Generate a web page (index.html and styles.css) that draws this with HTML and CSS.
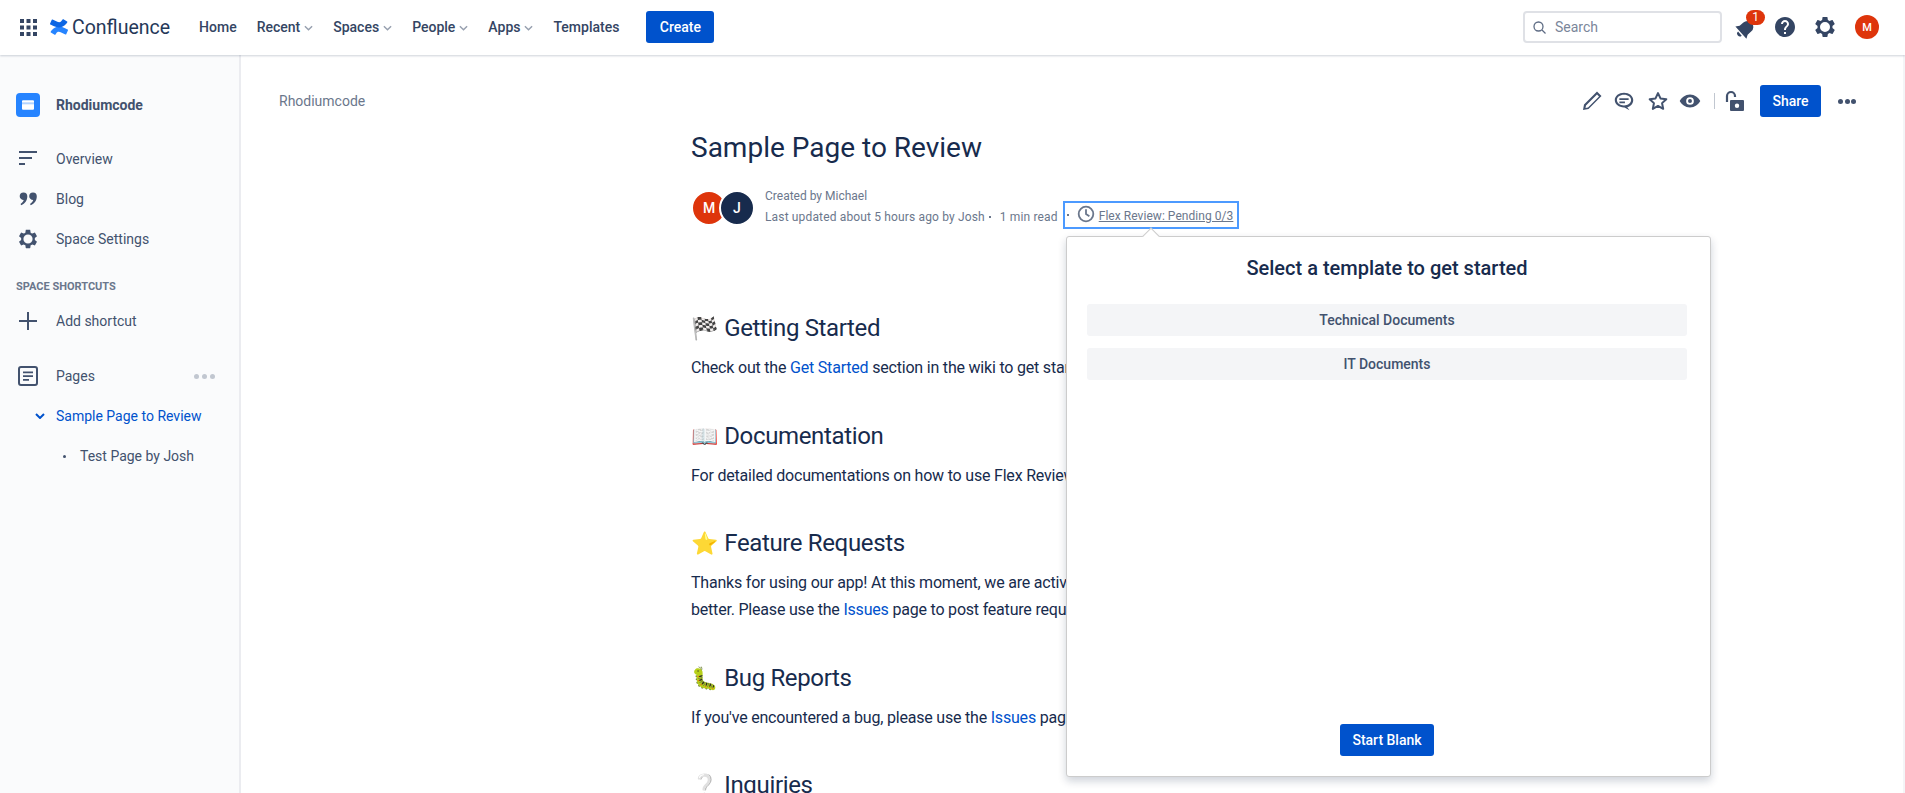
FILE: index.html
```html
<!DOCTYPE html>
<html lang="en">
<head>
    <meta charset="UTF-8">
    <meta name="viewport" content="width=device-width, initial-scale=1.0">
    <title>Sample Page to Review - Confluence</title>
    <link rel="stylesheet" href="styles.css">
</head>
<body>
    <svg class="sprites" aria-hidden="true">
        <symbol id="gear" viewBox="0 0 24 24"><path fill-rule="evenodd" d="M19.43 12.98c.04-.32.07-.64.07-.98s-.03-.66-.07-.98l2.11-1.65c.19-.15.24-.42.12-.64l-2-3.46c-.12-.22-.39-.3-.61-.22l-2.49 1c-.52-.4-1.08-.73-1.69-.98l-.38-2.65C14.46 2.18 14.25 2 14 2h-4c-.25 0-.46.18-.49.42l-.38 2.65c-.61.25-1.17.59-1.69.98l-2.49-1c-.23-.09-.49 0-.61.22l-2 3.46c-.13.22-.07.49.12.64l2.11 1.65c-.04.32-.07.65-.07.98s.03.66.07.98l-2.11 1.65c-.19.15-.24.42-.12.64l2 3.46c.12.22.39.3.61.22l2.49-1c.52.4 1.08.73 1.69.98l.38 2.65c.03.24.24.42.49.42h4c.25 0 .46-.18.49-.42l.38-2.65c.61-.25 1.17-.59 1.69-.98l2.49 1c.23.09.49 0 .61-.22l2-3.46c.12-.22.07-.49-.12-.64l-2.11-1.65zM12 17a5 5 0 1 1 0-10 5 5 0 0 1 0 10z"/></symbol>
        <symbol id="chevron" viewBox="0 0 10 6"><path d="M1 1l4 4 4-4" fill="none" stroke="currentColor"/></symbol>
    </svg>

    <header class="topbar">
        <svg class="apps-icon" viewBox="0 0 17 17"><path d="M0 0h4v4H0zM6.500 0h4v4h-4zM13 0h4v4h-4zM0 6.500h4v4H0zM6.500 6.500h4v4h-4zM13 6.500h4v4h-4zM0 13h4v4H0zM6.500 13h4v4h-4zM13 13h4v4h-4z"/></svg>
        <div class="logo">
            <svg class="logo-mark" viewBox="0 0 32 32">
                <path fill="#2684ff" d="M2.260 22.640c-.33.54-.7 1.170-1.020 1.670a1.020 1.020 0 0 0 .34 1.400l6.670 4.100a1.030 1.030 0 0 0 1.420-.34c.27-.44.61-1.020.99-1.650 2.670-4.400 5.360-3.860 10.200-1.550l6.610 3.140a1.030 1.030 0 0 0 1.380-.52l3.180-7.180a1.020 1.020 0 0 0-.51-1.340c-1.400-.66-4.180-1.970-6.680-3.170C17.010 13.870 9.610 14.230 2.260 22.640z"/>
                <path fill="#0c66e4" d="M29.740 9.360c.33-.54.7-1.170 1.020-1.670a1.020 1.020 0 0 0-.34-1.400l-6.670-4.100a1.030 1.030 0 0 0-1.420.34c-.27.44-.61 1.020-.99 1.650-2.670 4.400-5.360 3.860-10.200 1.550L4.530 2.590a1.030 1.030 0 0 0-1.380.52L-.03 10.290a1.020 1.020 0 0 0 .51 1.340c1.400.66 4.180 1.970 6.680 3.170 7.830 3.330 15.230 2.970 22.580-5.440z"/>
            </svg>
            <span>Confluence</span>
        </div>
        <nav class="topnav">
            <a>Home</a>
            <a>Recent <svg class="caret"><use href="#chevron"/></svg></a>
            <a>Spaces <svg class="caret"><use href="#chevron"/></svg></a>
            <a>People <svg class="caret"><use href="#chevron"/></svg></a>
            <a>Apps <svg class="caret"><use href="#chevron"/></svg></a>
            <a>Templates</a>
        </nav>
        <button class="btn-primary create">Create</button>
        <div class="topbar-right">
            <div class="search">
                <svg viewBox="0 0 16 16"><circle cx="7.500" cy="7.500" r="4.500" fill="none" stroke="#5e6c84" stroke-width="1.300"/><path d="M11 11l3.500 3.500" stroke="#5e6c84" stroke-width="1.300"/></svg>
                <span>Search</span>
            </div>
            <div class="bell">
                <svg viewBox="0 0 24 24"><g transform="rotate(48 12 12)"><path d="M12 2a6.500 6.500 0 0 0-6.500 6.500V14L3 18h18l-2.500-4V8.500A6.500 6.500 0 0 0 12 2z"/><path d="M9 19.500a3 3 0 0 0 6 0z"/></g></svg>
                <span class="badge">1</span>
            </div>
            <svg class="top-icon" viewBox="0 0 24 24"><path d="M12 2C6.480 2 2 6.480 2 12s4.480 10 10 10 10-4.480 10-10S17.520 2 12 2zm1 17h-2v-2h2v2zm2.070-7.750l-.9.92C13.450 12.900 13 13.500 13 15h-2v-.5c0-1.100.45-2.100 1.170-2.830l1.240-1.260c.37-.36.59-.86.59-1.410 0-1.100-.9-2-2-2s-2 .9-2 2H8c0-2.210 1.790-4 4-4s4 1.790 4 4c0 .88-.36 1.680-.93 2.250z"/></svg>
            <svg class="top-icon"><use href="#gear"/></svg>
            <span class="avatar avatar-small">M</span>
        </div>
    </header>

    <div class="layout">
        <aside class="sidebar">
            <div class="space-title">
                <span class="space-icon">
                    <svg viewBox="0 0 24 24"><path fill="#fff" d="M3 6.500A1.500 1.500 0 0 1 4.500 5h15A1.500 1.500 0 0 1 21 6.500v11a1.500 1.500 0 0 1-1.500 1.500h-15A1.500 1.500 0 0 1 3 17.500z"/><path fill="#b3d4ff" d="M3 8h18v3H3z"/></svg>
                </span>
                <strong>Rhodiumcode</strong>
            </div>
            <ul class="side-list">
                <li>
                    <svg class="side-icon" viewBox="0 0 20 20"><path d="M1 2h18v2H1zM1 8h13v2H1zM1 14h6v2H1z"/></svg>
                    Overview
                </li>
                <li>
                    <svg class="side-icon" viewBox="0 0 20 20"><path d="M5.500 3.500a3.800 3.800 0 0 1 3.800 3.800c0 4.200-2.300 7.500-6 9l-.8-1.300c1.800-1.100 2.900-2.600 3.200-4-2.300 0-4-1.700-4-3.700a3.800 3.800 0 0 1 3.800-3.800z"/><path transform="translate(9.500 0)" d="M5.500 3.500a3.800 3.800 0 0 1 3.800 3.800c0 4.200-2.300 7.500-6 9l-.8-1.300c1.800-1.100 2.900-2.600 3.200-4-2.300 0-4-1.700-4-3.700a3.800 3.800 0 0 1 3.800-3.800z"/></svg>
                    Blog
                </li>
                <li>
                    <svg class="side-icon gear-icon"><use href="#gear"/></svg>
                    Space Settings
                </li>
            </ul>
            <h4 class="side-heading">SPACE SHORTCUTS</h4>
            <ul class="side-list">
                <li>
                    <svg class="side-icon" viewBox="0 0 20 20"><path d="M9 1h2v8h8v2h-8v8H9v-8H1V9h8z"/></svg>
                    Add shortcut
                </li>
            </ul>
            <ul class="side-list pages-list">
                <li>
                    <svg class="side-icon" viewBox="0 0 20 20"><rect x="1" y="1" width="18" height="18" rx="2" fill="none" stroke="#42526e" stroke-width="2"/><path d="M5 5.500h10v1.800H5zM5 9.200h10V11H5zM5 12.900h6v1.800H5z"/></svg>
                    Pages
                    <span class="more-dots"><i></i><i></i><i></i></span>
                </li>
                <li class="current">
                    <svg class="tree-caret"><use href="#chevron"/></svg>
                    Sample Page to Review
                </li>
                <li class="child"><i class="bullet"></i>Test Page by Josh</li>
            </ul>
        </aside>

        <main class="main">
            <div class="page-bar">
                <span class="crumb">Rhodiumcode</span>
                <div class="page-actions">
                    <svg viewBox="0 0 24 24"><path d="M17 2.500l4.500 4.500L8.500 20 3 21l1-5.500zm0 3L6 16.500l-.5 2.500 2.500-.5L19 7.500z" fill-rule="evenodd"/></svg>
                    <svg class="act-comment" viewBox="-1 -1 26 26"><path fill-rule="evenodd" d="M12 3c5.500 0 10 3.400 10 8s-3.500 7.200-6.500 7.800L18 22l-5.500-3H12C6.500 19 2 15.600 2 11s4.500-8 10-8zm0 2.200C7.500 5.200 4.300 7.800 4.300 11s3.200 5.800 7.700 5.800 7.700-2.600 7.700-5.800S16.500 5.200 12 5.200zM7 9h10v2H7zm0 3.500h6v2H7z"/></svg>
                    <svg class="act-star" viewBox="-1 -1 26 26"><path d="M12 3.500l2.700 5.700 6.300.8-4.600 4.300 1.200 6.200L12 17.400l-5.600 3.100 1.200-6.200L3 10l6.300-.8z" fill="none" stroke="#42526e" stroke-width="2.200" stroke-linejoin="round"/></svg>
                    <svg class="act-eye" viewBox="-2 -2 28 28"><path fill-rule="evenodd" d="M12 4.500C6.500 4.500 2.200 8 0 12c2.200 4 6.500 7.500 12 7.500S21.800 16 24 12c-2.200-4-6.500-7.500-12-7.500zM12 7.500a4.500 4.500 0 1 1 0 9 4.500 4.500 0 0 1 0-9z"/><circle cx="12" cy="12" r="2.300"/></svg>
                    <span class="action-divider"></span>
                    <svg class="act-lock" viewBox="0 0 24 24"><path fill-rule="evenodd" d="M9 11h12a1 1 0 0 1 1 1v9a1 1 0 0 1-1 1H9a1 1 0 0 1-1-1v-9a1 1 0 0 1 1-1zm6 3.500a2.200 2.200 0 1 0 0 4.400 2.200 2.200 0 0 0 0-4.400z"/><path d="M5 13V7a4 4 0 0 1 8 0v1" fill="none" stroke="#42526e" stroke-width="2.200"/></svg>
                    <button class="btn-primary share">Share</button>
                    <span class="page-dots"><i></i><i></i><i></i></span>
                </div>
            </div>

            <article class="page">
                <h1 class="page-title">Sample Page to Review</h1>
                <div class="byline">
                    <div class="avatars">
                        <span class="avatar avatar-m">M</span>
                        <span class="avatar avatar-j">J</span>
                    </div>
                    <div class="byline-text">
                        <div>Created by Michael</div>
                        <div class="byline-row">
                            <span>Last updated about 5 hours ago by Josh</span>
                            <i class="dot"></i>
                            <span>1 min read</span>
                            <span class="flex-review">
                                <i class="dot"></i>
                                <svg viewBox="0 0 16 16"><circle cx="8" cy="8" r="6.500" fill="none" stroke="#6b778c" stroke-width="1.600"/><path d="M8 3.800V8l3 2" fill="none" stroke="#6b778c" stroke-width="1.600"/></svg>
                                <a>Flex Review: Pending 0/3</a>
                            </span>
                        </div>
                    </div>
                </div>

                <h2><span class="emoji">&#x1F3C1;</span> Getting Started</h2>
                <p>Check out the <a>Get Started</a> section in the wiki to get started with the app.</p>

                <h2><span class="emoji">&#x1F4D6;</span> Documentation</h2>
                <p>For detailed documentations on how to use Flex Review, see the wiki.</p>

                <h2><span class="emoji">&#x2B50;</span> Feature Requests</h2>
                <p>Thanks for using our app! At this moment, we are actively improving it to serve you<br>better. Please use the <a>Issues</a> page to post feature requests.</p>

                <h2><span class="emoji">&#x1F41B;</span> Bug Reports</h2>
                <p>If you've encountered a bug, please use the <a>Issues</a> page to report it.</p>

                <h2><span class="emoji">&#x2754;</span> Inquiries</h2>
            </article>

            <div class="popover">
                <span class="popover-arrow"></span>
                <h3>Select a template to get started</h3>
                <div class="template-list">
                    <button class="template">Technical Documents</button>
                    <button class="template">IT Documents</button>
                </div>
                <button class="btn-primary start-blank">Start Blank</button>
            </div>
        </main>
    </div>
</body>
</html>
```

FILE: styles.css
```css
* {
    box-sizing: border-box;
}
html, body {
    height: 100%;
}
body {
    margin: 0;
    overflow: hidden;
    font-family: Roboto, 'Liberation Sans', sans-serif;
    font-size: 14px;
    color: #172b4d;
    background: #fff;
    display: flex;
    flex-direction: column;
}
svg {
    fill: #42526e;
    flex: none;
}
ul {
    list-style: none;
    margin: 0;
    padding: 0;
}
.sprites {
    display: none;
}
.btn-primary {
    background: #0052cc;
    color: #fff;
    border: none;
    border-radius: 3px;
    font-family: inherit;
    font-size: 14px;
    font-weight: 500;
    height: 32px;
    padding: 0 12px;
}

/* top bar */
.topbar {
    height: 55px;
    flex: none;
    display: flex;
    align-items: center;
    padding: 0 0 1px 20px;
    background: #fff;
    box-shadow: 0 1px 2px rgba(9, 30, 66, 0.2);
    position: relative;
    z-index: 2;
}
.apps-icon {
    width: 17px;
    height: 17px;
    fill: #344563;
}
.logo {
    display: flex;
    align-items: center;
    margin-left: 13px;
    font-size: 19.5px;
    color: #253858;
}
.logo-mark {
    width: 18px;
    height: 18px;
    margin-right: 4px;
}
.topnav {
    display: flex;
    margin-left: 29px;
    gap: 20px;
}
.topnav a {
    font-weight: 500;
    color: #344563;
    display: flex;
    align-items: center;
    gap: 4px;
}
.caret {
    width: 9px;
    height: 6px;
    color: #97a0af;
    fill: none;
    margin-top: 2px;
    stroke-width: 1.6;
}
.create {
    margin-left: 27px;
    width: 68px;
    padding: 0;
}
.topbar-right {
    margin-left: auto;
    display: flex;
    align-items: center;
    padding-right: 26px;
}
.search {
    width: 199px;
    height: 32px;
    border: 2px solid #dfe1e6;
    border-radius: 4px;
    display: flex;
    align-items: center;
    gap: 8px;
    padding-left: 6px;
    color: #7a869a;
}
.search svg {
    width: 16px;
    height: 16px;
}
.bell {
    position: relative;
    margin-left: 12px;
    width: 22px;
    height: 24px;
}
.bell svg {
    width: 22px;
    height: 22px;
    fill: #344563;
    margin-top: 3px;
}
.badge {
    position: absolute;
    left: 12px;
    top: -5px;
    width: 19px;
    height: 15px;
    border-radius: 8px;
    background: #de350b;
    color: #fff;
    font-size: 12px;
    line-height: 15px;
    text-align: center;
}
.top-icon {
    width: 24px;
    height: 24px;
    fill: #344563;
    margin-left: 17px;
}
.top-icon + .top-icon {
    margin-left: 16px;
}
.avatar {
    border-radius: 50%;
    color: #fff;
    display: flex;
    align-items: center;
    justify-content: center;
    font-weight: 500;
}
.avatar-small {
    width: 24px;
    height: 24px;
    background: #de350b;
    font-size: 11px;
    margin-left: 18px;
}

/* left side */
.layout {
    flex: 1;
    display: flex;
    min-height: 0;
}
.sidebar {
    width: 241px;
    flex: none;
    background: #fafbfc;
    border-right: 2px solid #ebecf0;
    color: #42526e;
    padding-top: 38px;
}
.space-title {
    display: flex;
    align-items: center;
    height: 24px;
    padding-left: 16px;
    margin-bottom: 22px;
}
.space-icon {
    width: 24px;
    height: 24px;
    border-radius: 4px;
    background: #2684ff;
    display: flex;
    align-items: center;
    justify-content: center;
    margin-right: 16px;
}
.space-icon svg {
    width: 16px;
    height: 16px;
}
.side-list li {
    height: 40px;
    display: flex;
    align-items: center;
    position: relative;
    padding-left: 56px;
}
.side-icon {
    position: absolute;
    left: 18px;
    top: 10px;
    width: 20px;
    height: 20px;
}
.side-list .gear-icon {
    left: 17px;
    top: 9px;
    width: 22px;
    height: 22px;
}
.side-heading {
    margin: 20px 0 0 16px;
    height: 16px;
    font-size: 11px;
    line-height: 16px;
    font-weight: 700;
    color: #6b778c;
}
.side-heading + .side-list {
    margin-top: 6px;
}
.pages-list {
    margin-top: 15px;
}
.more-dots {
    position: absolute;
    right: 24px;
    display: flex;
    gap: 3px;
}
.more-dots i {
    width: 5px;
    height: 5px;
    border-radius: 50%;
    background: #c1c7d0;
}
.current {
    color: #0052cc;
}
.tree-caret {
    position: absolute;
    left: 35px;
    top: 17px;
    width: 10px;
    height: 6px;
    color: #0052cc;
    fill: none;
    stroke-width: 2;
}
.side-list .child {
    padding-left: 80px;
}
.bullet {
    position: absolute;
    left: 63px;
    width: 3px;
    height: 3px;
    border-radius: 50%;
    background: #42526e;
}

/* page */
.main {
    flex: 1;
    position: relative;
    min-width: 0;
    border-right: 2px solid #f4f5f7;
}
.page-bar {
    display: flex;
    align-items: center;
    justify-content: space-between;
    height: 32px;
    margin-top: 30px;
    padding: 0 47px 0 38px;
}
.crumb {
    color: #6b778c;
}
.page-actions {
    display: flex;
    align-items: center;
}
.page-actions svg {
    width: 24px;
    height: 24px;
}
.page-actions .act-comment, .page-actions .act-eye {
    margin-left: 8px;
}
.page-actions .act-star {
    margin-left: 10px;
}
.action-divider {
    width: 1px;
    height: 16px;
    margin-left: 12px;
    background: #c1c7d0;
}
.page-actions .act-lock {
    margin-left: 7px;
}
.share {
    width: 61px;
    padding: 0;
    margin-left: 14px;
}
.page-dots {
    display: flex;
    gap: 1.5px;
    margin-left: 17px;
}
.page-dots i {
    width: 5px;
    height: 5px;
    border-radius: 50%;
    background: #42526e;
}
.page {
    margin-left: 450px;
    width: 760px;
}
.page-title {
    margin: 15px 0 0;
    font-size: 28px;
    line-height: 32px;
    font-weight: 400;
}
.byline {
    display: flex;
    align-items: flex-start;
    margin-top: 22px;
    font-size: 12px;
    color: #6b778c;
}
.avatars {
    display: flex;
    width: 74px;
    margin-top: 4px;
}
.avatar-m, .avatar-j {
    width: 36px;
    height: 36px;
    border: 2px solid #fff;
    font-size: 14px;
    position: relative;
}
.avatar-m {
    background: #de350b;
}
.avatar-j {
    background: #172b4d;
    margin-left: -8px;
}
.byline-text {
    line-height: 20px;
}
.byline-row {
    display: flex;
    align-items: center;
    height: 20px;
    margin-top: 1px;
    letter-spacing: 0.15px;
}
.dot {
    display: inline-block;
    width: 2px;
    height: 2px;
    background: #6b778c;
    margin: 0 9px 0 4px;
}
.flex-review {
    display: flex;
    align-items: center;
    height: 28px;
    margin: 0 0 4px 5px;
    padding: 2px 4px 0 2px;
    border: 2px solid #4c9aff;
    letter-spacing: 0.05px;
}
.flex-review .dot {
    margin: -2px 8px 0 0;
}
.flex-review svg {
    width: 18px;
    height: 18px;
    margin: -4px 4px 0 0;
}
.flex-review a {
    text-decoration: underline;
}
h2 {
    margin: 0;
    font-size: 24px;
    font-weight: 400;
    line-height: 32px;
    letter-spacing: -0.015em;
}
.byline + h2 {
    margin-top: 85px;
}
p + h2 {
    margin-top: 38.5px;
}
p {
    margin: 9px 0 0;
    font-size: 16px;
    line-height: 27px;
    letter-spacing: -0.2px;
}
p a {
    color: #0052cc;
}
.emoji {
    font-size: 22px;
    margin-right: 1px;
}

/* template picker */
.popover {
    position: absolute;
    left: 825px;
    top: 181px;
    width: 645px;
    height: 541px;
    background: #fff;
    border: 1px solid #ccc;
    border-radius: 3px;
    box-shadow: 0 4px 8px rgba(9, 30, 66, 0.2);
    display: flex;
    flex-direction: column;
    align-items: center;
    padding: 16px 23px 20px 20px;
}
.popover-arrow {
    position: absolute;
    left: 78px;
    top: -7px;
    width: 12px;
    height: 12px;
    background: #fff;
    border-left: 1px solid #ccc;
    border-top: 1px solid #ccc;
    transform: rotate(45deg);
}
.popover h3 {
    margin: 0;
    font-size: 20px;
    line-height: 30px;
    font-weight: 500;
}
.template-list {
    width: 100%;
    margin-top: 21px;
    display: flex;
    flex-direction: column;
    gap: 12px;
}
.template {
    height: 32px;
    background: #f4f5f7;
    border: none;
    border-radius: 3px;
    color: #42526e;
    font-family: inherit;
    font-size: 14px;
    font-weight: 500;
}
.start-blank {
    margin-top: auto;
    width: 94px;
    padding: 0;
}
```
